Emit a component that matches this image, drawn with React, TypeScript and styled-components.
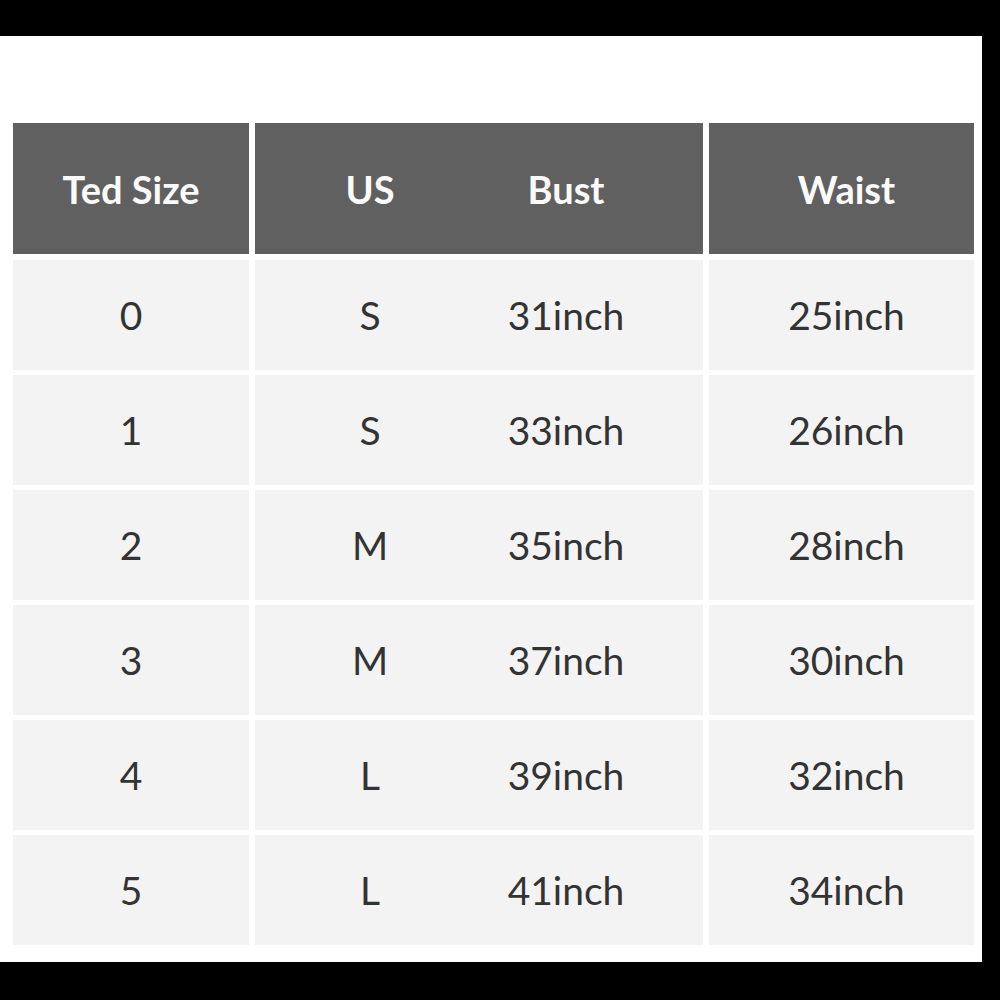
import React from 'react';
import styled, {createGlobalStyle} from 'styled-components';

const GlobalStyle = createGlobalStyle`
  html, body {
    margin: 0;
    padding: 0;
    background: #000;
  }
`;

const Frame = styled.div`
  width: 1000px;
  height: 1000px;
  box-sizing: border-box;
  background: #000;
  padding: 36px 18px 38px 0;
`;

const Sheet = styled.div`
  height: 100%;
  background: #fff;
  box-sizing: border-box;
  padding: 87px 0 0 13px;
`;

const Table = styled.div`
  display: grid;
  grid-template-columns: 236px 448px 265px;
  grid-template-rows: 132px repeat(6, 110px);
  column-gap: 6px;
  row-gap: 5px;
  font-family: Lato, 'Liberation Sans', sans-serif;
`;

const Cell = styled.div<{$head?: boolean; $shift?: number}>`
  display: flex;
  align-items: center;
  justify-content: center;
  box-sizing: border-box;
  padding-left: ${p => (p.$shift ?? 0) * 2}px;
  background: ${p => (p.$head ? '#606060' : '#f3f3f3')};
  color: ${p => (p.$head ? '#fafafa' : '#333')};
  font-size: ${p => (p.$head ? '38px' : '39px')};
  font-weight: ${p => (p.$head ? 700 : 400)};
  margin-bottom: ${p => (p.$head ? '1px' : '0')};
`;

const Split = styled(Cell)`
  display: grid;
  grid-template-columns: 230px 162px;
  justify-content: start;
  justify-items: center;
`;

const rows = [
  ['0', 'S', '31inch', '25inch'],
  ['1', 'S', '33inch', '26inch'],
  ['2', 'M', '35inch', '28inch'],
  ['3', 'M', '37inch', '30inch'],
  ['4', 'L', '39inch', '32inch'],
  ['5', 'L', '41inch', '34inch'],
];

const App: React.FC = () => {
  return (
    <>
      <GlobalStyle />
      <Frame>
        <Sheet>
          <Table>
            <Cell $head>Ted Size</Cell>
            <Split $head>
              <span>US</span>
              <span>Bust</span>
            </Split>
            <Cell $head $shift={5}>Waist</Cell>
            {rows.map(r => (
              <React.Fragment key={r[0]}>
                <Cell>{r[0]}</Cell>
                <Split>
                  <span>{r[1]}</span>
                  <span>{r[2]}</span>
                </Split>
                <Cell $shift={5}>{r[3]}</Cell>
              </React.Fragment>
            ))}
          </Table>
        </Sheet>
      </Frame>
    </>
  );
};

export default App;
